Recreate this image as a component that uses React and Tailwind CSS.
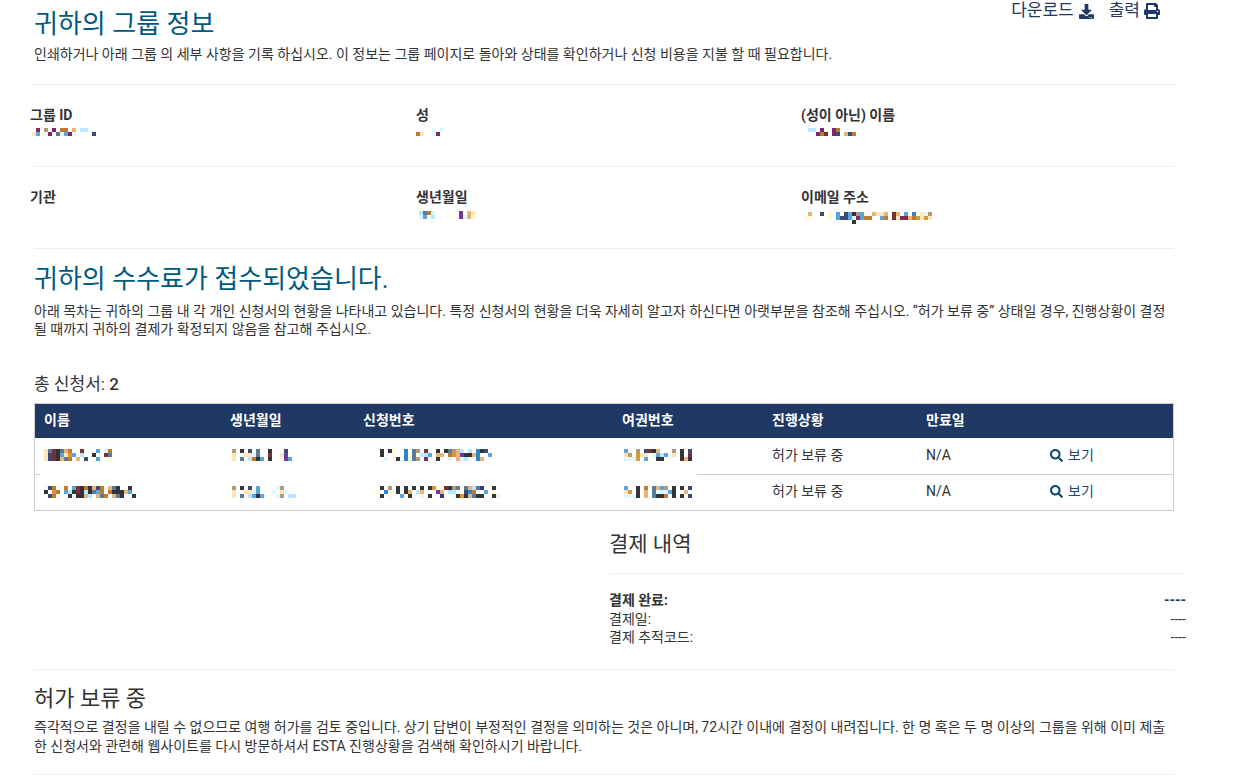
import React from 'react';
import { FaDownload, FaPrint, FaSearch } from 'react-icons/fa';

// colours of the blurred-out personal data
const palette = {
  c: '#ffe6b8', C: '#fff8dc', g: '#5a7a9a', m: '#7a3030', d: '#333338', o: '#c07a30', O: '#d8983c',
  b: '#5aa5e0', B: '#2e86c8', l: '#b8e8ff', L: '#dff8ff', n: '#3c4a78', N: '#2f3a8c', t: '#e8b478',
  s: '#b09a78', v: '#6a3a9a', p: '#7a2a6a', f: '#f0fff0',
};

const Mosaic = ({ rows, className = '' }) => (
  <svg
    width={Math.max(...rows.map((r) => r.length)) * 4}
    height={rows.length * 4}
    shapeRendering="crispEdges"
    className={`block ${className}`}
  >
    {rows.map((row, y) =>
      row.split('').map((ch, x) =>
        palette[ch] ? <rect key={x + '-' + y} x={x * 4} y={y * 4} width="4" height="4" fill={palette[ch]} /> : null
      )
    )}
  </svg>
);

const Rule = () => <div className="border-t border-[#eeeeee]" />;

const InfoCell = ({ label, rows, dx = '' }) => (
  <div className="h-[81px] pt-[21px] -ml-1">
    <div className="text-[14px] leading-[18px] font-bold text-[#333333]">{label}</div>
    {rows && <Mosaic rows={rows} className={dx} />}
  </div>
);

const people = [
  {
    name: ['cgmdgto..m...b.Lo', 'cnmdbcOb.l..d..mg', 'cnmdtgo.t.n..b..C'],
    birth: ['s.d.n.g..d...n.', 'c..ccLg..m..cv.', 'c.g.lodb.d...vb'],
    app: ['d.dC..B.gs.m..d.dgstl.l.Bdn.', 'd..C..BCgCllb.tt.oOtvddtB..b', '.L.Cd.BCgs.p..d..L.tLlC.Bt..'],
    appX: 'ml-[17px]',
    passport: ['b..s.nmdt...s.d.n', 'cO.Occ.Lblb.c.d.m', 'LLLO.b..dd....dtd'],
    h: 'h-[36px]',
  },
  {
    name: ['Cno.fo.bmdodtno.tgd..d.', 'd.Oo.bldmdldgbo.odddtb', '.no.f.dLddtl.tgo.tgd..d'],
    birth: ['s.d.n.b....Ls.', 'c..ccLb...L.cL..', 'c.g.lbdb...Ls.ll'],
    app: ['.d.s.d.d.d.d.dOC.mdsg.gtlgN..d.', 'C.BC.d.dt.lt...vt.ll..nBoL.b.C.', '.d.C..b.d..L.d..N..CdOdtgdd..dL'],
    appX: 'ml-[13px]',
    passport: ['b..d.o.gtbs.d.d.n', 'cO.d.t.gLLLbd..t.', 'LLLd.t.gddo.d.d.n'],
    h: 'h-[35px]',
  },
];

const cols = 'grid grid-cols-[186px_133px_259px_150px_154px_124px_1fr]';

const App = () => {
  return (
    <div className="min-h-[784px] bg-white px-[34px] overflow-hidden font-['Roboto','Noto_Sans_CJK_KR',sans-serif] text-[#333333]">
      <div className="w-[1140px]">
        {/* Title and actions */}
        <div className="flex justify-between h-[84px]">
          <div>
            <h1 className="text-[26px] leading-[30px] pt-[9px] text-[#005a7d]">귀하의 그룹 정보</h1>
            <p className="mt-[6px] text-[14px] leading-[18px]">
              인쇄하거나 아래 그룹 의 세부 사항을 기록 하십시오. 이 정보는 그룹 페이지로 돌아와 상태를 확인하거나 신청 비용을 지불 할 때 필요합니다.
            </p>
          </div>
          <div className="flex items-center gap-[15px] h-[21px] mr-[14px] text-[17px] text-[#1f3864]">
            <span className="flex items-center gap-[5px]">다운로드 <FaDownload className="w-[15px] h-[15px] mt-[1px]" /></span>
            <span className="flex items-center gap-[4px]">출력 <FaPrint className="w-[16px] h-[16px] mt-[1px]" /></span>
          </div>
        </div>
        <Rule />

        {/* Group info */}
        <div className="grid grid-cols-[386px_385px_1fr]">
          <InfoCell label="그룹 ID" rows={['.p.s.p.oo.t.ll..', 'cbC.p.gLbpC....n']} dx="mt-[4px] ml-[2px]" />
          <InfoCell label="성" rows={['....L.L', 'oc..Lp.']} dx="mt-[4px]" />
          <InfoCell label="(성이 아닌) 이름" rows={['.ll.p..po....', '...pom.pn.tno']} dx="mt-[4px] ml-[3px]" />
        </div>
        <Rule />
        <div className="grid grid-cols-[386px_385px_1fr]">
          <InfoCell label="기관" />
          <InfoCell label="생년월일" rows={['lgoL......v.tc.', 'Lb.l......vLtC.']} dx="mt-[5px] ml-[3px]" />
          <InfoCell
            label="이메일 주소"
            rows={['.t..n.C.b.nbdsbC.tcct.mt.b.B.cLs', 'CC....C.bnnbLpboo..bo.mcpmtoOcOc', '............d']}
            dx="mt-[6px] ml-[3px]"
          />
        </div>
        <Rule />

        {/* Fee section */}
        <h2 className="mt-[15px] text-[26px] leading-[30px] text-[#005a7d]">귀하의 수수료가 접수되었습니다.</h2>
        <p className="mt-[8px] text-[14px] leading-[18px]">
          아래 목차는 귀하의 그룹 내 각 개인 신청서의 현황을 나타내고 있습니다. 특정 신청서의 현황을 더욱 자세히 알고자 하신다면 아랫부분을 참조해 주십시오. “허가 보류 중” 상태일 경우, 진행상황이 결정될 때까지 귀하의 결제가 확정되지 않음을 참고해 주십시오.
        </p>
        <div className="mt-[36px] text-[17px] leading-[20px]">총 신청서: <span className="font-medium">2</span></div>

        {/* Applications table */}
        <div className="mt-[9px] border border-[#d0d0d0]">
          <div className={`${cols} h-[34px] pb-[2px] items-center bg-[#1f3864] text-[14px] font-bold text-white`}>
            {['이름', '생년월일', '신청번호', '여권번호', '진행상황', '만료일', ''].map((h) => (
              <div key={h} className="px-[9px]">{h}</div>
            ))}
          </div>
          {people.map((p, i) => (
            <div key={i}>
              {i > 0 && (
                <div className="flex justify-between">
                  <div className="w-[5px] border-t border-[#d0d0d0]" />
                  <div className="w-[476px] border-t border-[#d0d0d0]" />
                </div>
              )}
              <div className={`${cols} ${p.h} pb-[2px] items-center text-[14px]`}>
                <div className="px-[9px]"><Mosaic rows={p.name} /></div>
                <div className="px-[9px]"><Mosaic rows={p.birth} className="ml-[2px]" /></div>
                <div className="px-[9px]"><Mosaic rows={p.app} className={p.appX} /></div>
                <div className="px-[9px]"><Mosaic rows={p.passport} className="ml-[2px]" /></div>
                <div className="px-[9px]">허가 보류 중</div>
                <div className="px-[9px]">N/A</div>
                <div className="px-[9px] flex items-center gap-[5px] text-[#1f4a73]">
                  <FaSearch className="w-[13px] h-[13px] text-[#0a4a70]" /> 보기
                </div>
              </div>
            </div>
          ))}
        </div>

        {/* Payment summary */}
        <div className="ml-[575px] w-[577px] h-[158px]">
          <h3 className="pt-[19px] text-[21px] leading-[28px]">결제 내역</h3>
          <div className="mt-[15px] border-t border-[#eeeeee]" />
          <div className="mt-[17px] text-[14px] leading-[18.5px]">
            <div className="flex justify-between font-bold"><span>결제 완료:</span><span className="text-[#1f3864]">----</span></div>
            <div className="flex justify-between"><span>결제일:</span><span className="text-[#1f3864]">----</span></div>
            <div className="flex justify-between"><span>결제 추적코드:</span><span className="text-[#1f3864]">----</span></div>
          </div>
        </div>
        <Rule />

        {/* Pending note */}
        <h3 className="mt-[15px] text-[22px] leading-[28px]">허가 보류 중</h3>
        <p className="mt-[5px] text-[14px] leading-[19px]">
          즉각적으로 결정을 내릴 수 없으므로 여행 허가를 검토 중입니다. 상기 답변이 부정적인 결정을 의미하는 것은 아니며, 72시간 이내에 결정이 내려집니다. 한 명 혹은 두 명 이상의 그룹을 위해 이미 제출한 신청서와 관련해 웹사이트를 다시 방문하셔서 ESTA 진행상황을 검색해 확인하시기 바랍니다.
        </p>
        <div className="mt-[18px]"><Rule /></div>
      </div>
    </div>
  );
};

export default App;
